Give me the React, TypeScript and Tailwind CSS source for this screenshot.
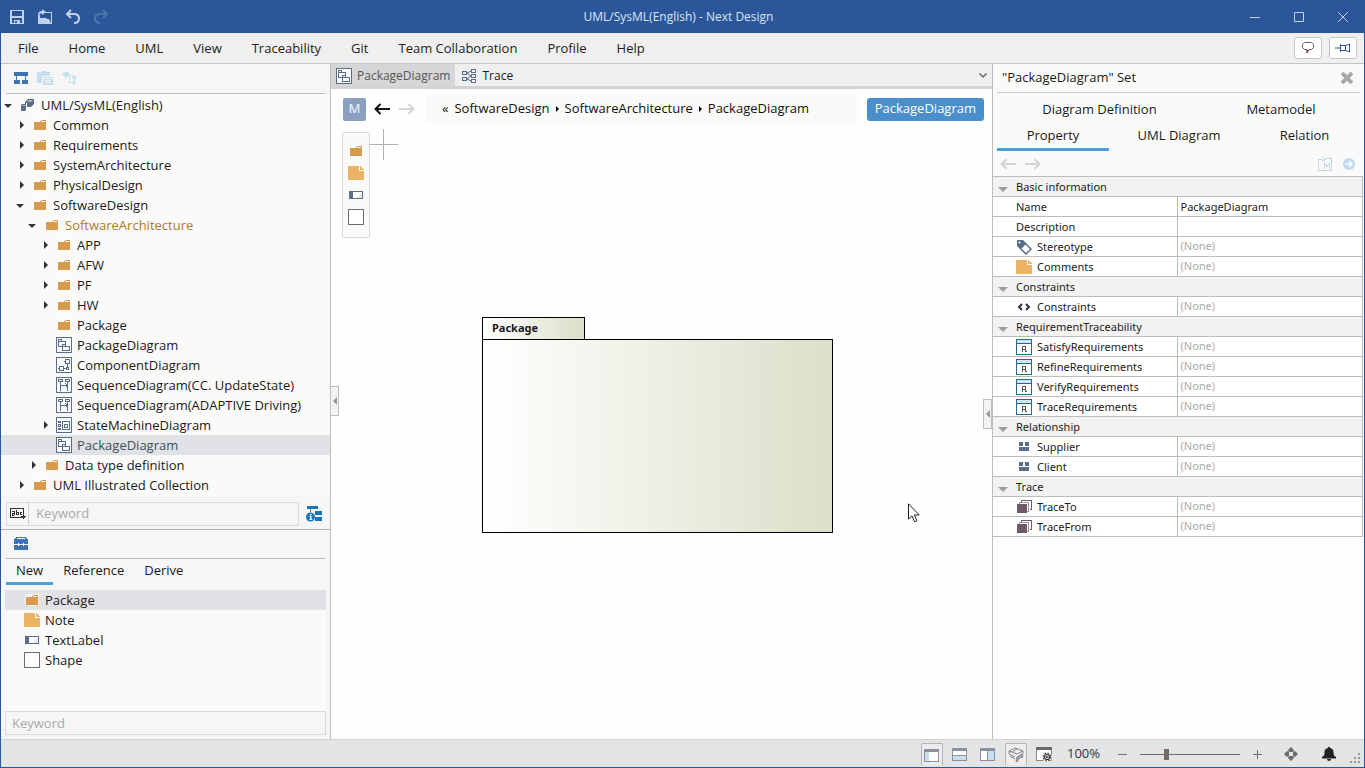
import type { ReactNode } from 'react';
import clsx from 'clsx';

type IconName =
  | 'folder'
  | 'note'
  | 'textLabel'
  | 'shape'
  | 'project'
  | 'package'
  | 'component'
  | 'sequence'
  | 'state'
  | 'tag'
  | 'code'
  | 'requirement'
  | 'blocks'
  | 'stack';

const SLATE = '#596d87';

/* All item icons share a 16x16 box */
const ICONS: Record<IconName, ReactNode> = {
  folder: (
    <>
      <path d="M1 2h14v12H1z" fill="#fff" fillOpacity=".6" />
      <path d="M2 5h6l1-2h5v10H2z" fill="#d89b4e" />
      <path d="M8 5h5V4H9z" fill="#fff" />
    </>
  ),
  note: (
    <>
      <path d="M0 1h11v5h5v9H0z" fill="#eab464" />
      <path d="M12 1l4 4h-4z" fill="#eab464" />
    </>
  ),
  textLabel: (
    <>
      <path d="M1 4h14v8H1z" fill={SLATE} />
      <path d="M5 5h9v6H5z" fill="#fff" />
      <path d="M14 6v5H8z" fill="#e6e8ec" />
    </>
  ),
  shape: <path d="M.5.5h15v15H.5z" fill="#fff" stroke="#6b6b6b" />,
  project: (
    <>
      <path d="M5 5l3-3h6v5l-3 3H7L5 8z" fill={SLATE} />
      <path d="M1 8l1-1h4v6l-1 1H1z" fill={SLATE} />
      <path d="M7 5l2-2h4l-2 2zM2 9l1-1h3L5 9z" fill="#aeb7c5" />
      <path d="M6.500 6v4" stroke="#fafaf8" />
    </>
  ),
  package: (
    <g fill="none" stroke={SLATE}>
      <path d="M.5.5h15v15H.5z" fill="#fafbfc" />
      <path d="M2.500 9.500v-7h3v2h4v3M2.500 4.500h3M2.500 9.500h4" />
      <path d="M6.500 13.500v-6h3v2h4v4zM6.500 9.500h3" />
    </g>
  ),
  component: (
    <g fill="none" stroke={SLATE}>
      <path d="M.5.5h15v15H.5z" fill="#fafbfc" />
      <path d="M9.500 2.500h4v4h-4zM8 4.500h2M3.500 9.500h4v4h-4zM2 11.500h2M11.500 6.500v4M7.500 11.500h3" />
      <path d="M10.500 10.500h2v2h-2z" />
    </g>
  ),
  sequence: (
    <g fill="none" stroke={SLATE}>
      <path d="M.5.5h15v15H.5z" fill="#fafbfc" />
      <path d="M2.500 2.500h4v2h-4zM9.500 2.500h4v2h-4zM4.500 5v9M11.500 5v9M5 8.500h6M9.500 6.500l2 2-2 2" />
    </g>
  ),
  state: (
    <g fill="none" stroke={SLATE}>
      <path d="M.5.5h15v15H.5z" fill="#fafbfc" />
      <path d="M6.500 4.500h7v8h-7zM8.500 7.500h3v3h-3zM2.500 7.500h2v2h-2zM2.500 11.500h2v1h-2z" />
      <path d="M2 4h3v2H2zM7 4h6v1H7z" fill={SLATE} stroke="none" />
    </g>
  ),
  tag: (
    <>
      <path d="M1 1h6l3 3-6 6-3-3z" fill={SLATE} />
      <path d="M4.500 9.500l5-5 5.500 5.500-5 5z" fill="#fff" stroke={SLATE} strokeWidth="1.500" />
      <circle cx="3.500" cy="3.500" r="1" fill="#fff" />
    </>
  ),
  code: <path d="M6 5L3 8l3 3M10 5l3 3-3 3" fill="none" stroke="#2f3640" strokeWidth="2" />,
  requirement: (
    <>
      <path d="M.5.5h15v15H.5z" fill="#fff" stroke="#1c6c93" />
      <path d="M1 1h14v3H1z" fill="#cfe9f2" />
      <path d="M1 4h14v1H1z" fill="#1c6c93" />
      <path d="M6.500 13V7.500h3v3h-3M8.500 10.500l2 2.500" fill="none" stroke="#555" />
    </>
  ),
  blocks: <path d="M3 3h4v4H3zM9 3h4v4H9zM3 8h10v4H3z" fill={SLATE} />,
  stack: (
    <>
      <path d="M5.500 3V1.500h10v9H14" fill="none" stroke="#705a68" />
      <path d="M3.500 5V3.500h9v9H11" fill="none" stroke="#a093a0" />
      <path d="M1 5h10v9H1z" fill="#705a68" />
    </>
  ),
};

function Icon({ name }: { name: IconName }) {
  const smooth = name === 'code' || name === 'tag' || name === 'project';
  return (
    <svg
      className="h-4 w-4 shrink-0"
      viewBox="0 0 16 16"
      shapeRendering={smooth ? 'auto' : 'crispEdges'}
      aria-hidden="true"
    >
      {ICONS[name]}
    </svg>
  );
}

function Arrow({ back = false, className }: { back?: boolean; className: string }) {
  return (
    <svg className={clsx('h-3 w-4', className)} viewBox="0 0 16 12" fill="none" stroke="currentColor" aria-hidden="true">
      {back ? <path d="M16 6H1M6.500 1l-5 5 5 5" /> : <path d="M0 6h15M9.500 1l5 5-5 5" />}
    </svg>
  );
}

interface TreeItem {
  label: string;
  level: 0 | 1 | 2 | 3;
  icon: IconName;
  state?: 'open' | 'closed';
  accent?: boolean;
  selected?: boolean;
}

const TREE: TreeItem[] = [
  { label: 'UML/SysML(English)', level: 0, icon: 'project', state: 'open' },
  { label: 'Common', level: 1, icon: 'folder', state: 'closed' },
  { label: 'Requirements', level: 1, icon: 'folder', state: 'closed' },
  { label: 'SystemArchitecture', level: 1, icon: 'folder', state: 'closed' },
  { label: 'PhysicalDesign', level: 1, icon: 'folder', state: 'closed' },
  { label: 'SoftwareDesign', level: 1, icon: 'folder', state: 'open' },
  { label: 'SoftwareArchitecture', level: 2, icon: 'folder', state: 'open', accent: true },
  { label: 'APP', level: 3, icon: 'folder', state: 'closed' },
  { label: 'AFW', level: 3, icon: 'folder', state: 'closed' },
  { label: 'PF', level: 3, icon: 'folder', state: 'closed' },
  { label: 'HW', level: 3, icon: 'folder', state: 'closed' },
  { label: 'Package', level: 3, icon: 'folder' },
  { label: 'PackageDiagram', level: 3, icon: 'package' },
  { label: 'ComponentDiagram', level: 3, icon: 'component' },
  { label: 'SequenceDiagram(CC. UpdateState)', level: 3, icon: 'sequence' },
  { label: 'SequenceDiagram(ADAPTIVE Driving)', level: 3, icon: 'sequence' },
  { label: 'StateMachineDiagram', level: 3, icon: 'state', state: 'closed' },
  { label: 'PackageDiagram', level: 3, icon: 'package', selected: true },
  { label: 'Data type definition', level: 2, icon: 'folder', state: 'closed' },
  { label: 'UML Illustrated Collection', level: 1, icon: 'folder', state: 'closed' },
];

const INDENT = ['pl-px', 'pl-[13px]', 'pl-[25px]', 'pl-[37px]'];

const MENU = ['File', 'Home', 'UML', 'View', 'Traceability', 'Git', 'Team Collaboration', 'Profile', 'Help'];

const TOOLS: { label: string; icon: IconName }[] = [
  { label: 'Package', icon: 'folder' },
  { label: 'Note', icon: 'note' },
  { label: 'TextLabel', icon: 'textLabel' },
  { label: 'Shape', icon: 'shape' },
];

interface Property {
  label: string;
  icon?: IconName;
  value?: string;
}

const SECTIONS: { title: string; rows: Property[] }[] = [
  {
    title: 'Basic information',
    rows: [
      { label: 'Name', value: 'PackageDiagram' },
      { label: 'Description', value: '' },
      { label: 'Stereotype', icon: 'tag' },
      { label: 'Comments', icon: 'note' },
    ],
  },
  { title: 'Constraints', rows: [{ label: 'Constraints', icon: 'code' }] },
  {
    title: 'RequirementTraceability',
    rows: [
      { label: 'SatisfyRequirements', icon: 'requirement' },
      { label: 'RefineRequirements', icon: 'requirement' },
      { label: 'VerifyRequirements', icon: 'requirement' },
      { label: 'TraceRequirements', icon: 'requirement' },
    ],
  },
  {
    title: 'Relationship',
    rows: [
      { label: 'Supplier', icon: 'blocks' },
      { label: 'Client', icon: 'blocks' },
    ],
  },
  {
    title: 'Trace',
    rows: [
      { label: 'TraceTo', icon: 'stack' },
      { label: 'TraceFrom', icon: 'stack' },
    ],
  },
];

function TitleBar() {
  return (
    <header className="flex h-[33px] shrink-0 items-center bg-[#2b579a] text-[#c3d1e8]">
      <div className="flex flex-1 items-center gap-3 pl-2">
        <button aria-label="Save">
          <svg className="h-4 w-4" viewBox="0 0 16 16" fill="currentColor" fillRule="evenodd" shapeRendering="crispEdges">
            <path d="M1 1h14v14H1zM3 2v5h10V2zM3 9v5h2v-3h6v3h2V9zM6 12v2h2v-2z" />
          </svg>
        </button>
        <button aria-label="Open">
          <svg className="h-4 w-4" viewBox="0 0 16 16" fill="currentColor">
            <path d="M2 6h1v8h12v1H1V6zM7 3h8v12h-1V4H7z" />
            <path d="M3 14V9h6l1 1h2l2 4zM5 0l4 3-4 3V4.500C3 4.500 2.500 5 2 6H1c0-2.500 1.500-4 4-4z" />
          </svg>
        </button>
        <button aria-label="Undo">
          <svg className="h-4 w-4" viewBox="0 0 16 16" fill="none" stroke="currentColor" strokeWidth="2">
            <path d="M6 1L2 5l4 4M2 5h7c3 0 5 1.500 5 4.500S12 14 9 14" />
          </svg>
        </button>
        <button aria-label="Redo" className="text-[#4d77a8]">
          <svg className="h-4 w-4" viewBox="0 0 16 16" fill="none" stroke="currentColor" strokeWidth="2">
            <path d="M10 1l4 4-4 4M14 5H7c-3 0-5 1.500-5 4.500S4 14 7 14" />
          </svg>
        </button>
      </div>
      <h1 className="text-[12px] text-[#dbe4f2]">UML/SysML(English) - Next Design</h1>
      <div className="flex flex-1 items-center justify-end gap-[34px] pr-4">
        <button aria-label="Minimize">
          <svg className="h-[10px] w-[10px]" viewBox="0 0 10 10" stroke="currentColor"><path d="M0 5.500h10" /></svg>
        </button>
        <button aria-label="Maximize">
          <svg className="h-[10px] w-[10px]" viewBox="0 0 10 10" fill="none" stroke="currentColor"><path d="M.5.5h9v9h-9z" /></svg>
        </button>
        <button aria-label="Close">
          <svg className="h-[10px] w-[10px]" viewBox="0 0 10 10" stroke="currentColor"><path d="M0 0l10 10M10 0L0 10" /></svg>
        </button>
      </div>
    </header>
  );
}

function MenuBar() {
  return (
    <nav className="flex h-[31px] shrink-0 items-center border-b border-[#c3c3c3] bg-[#efefef] pr-[7px] pl-[2px] text-[#222]">
      {MENU.map((item) => (
        <button key={item} className="px-[15px] leading-5">{item}</button>
      ))}
      <div className="ml-auto flex gap-[7px]">
        <button aria-label="Feedback" className="flex h-[22px] w-7 items-center justify-center rounded-[3px] border border-[#c6c6c6] bg-white">
          <svg className="h-3 w-3" viewBox="0 0 12 12" fill="none" stroke="#6a5560">
            <path d="M2.500.5h7l2 2v3l-2 2H7L5 11V7.500H2.500l-2-2v-3z" />
            <path d="M4.500 8v3l3-3z" fill="#6a5560" stroke="none" />
          </svg>
        </button>
        <button aria-label="Pin ribbon" className="flex h-[22px] w-7 items-center justify-center rounded-[3px] border border-[#c6c6c6] bg-white">
          <svg className="h-[10px] w-4" viewBox="0 0 16 10" fill="none" stroke="#2b579a">
            <path d="M0 5h5M5.500 1v8M5.500 2.500H11L14.500 1v8L11 7.500H5.500M10.500 2.500v5" />
          </svg>
        </button>
      </div>
    </nav>
  );
}

function ModelTree() {
  return (
    <ul className="h-[402px] shrink-0 bg-[#fafaf8] pt-px">
      {TREE.map((item, i) => (
        <li
          key={i}
          className={clsx('flex h-5 items-center', INDENT[item.level], item.selected && 'bg-[#e1e2e6] text-[#3f4f5c]', item.accent && 'text-[#ad7b2c]')}
        >
          <svg className="h-3 w-[18px] shrink-0" viewBox="0 0 18 12" fill="#333340" aria-hidden="true">
            {item.state === 'closed' && <path d="M6 2l4 4-4 4z" />}
            {item.state === 'open' && <path d="M2 5h8L6 9z" />}
          </svg>
          <Icon name={item.icon} />
          <span className="pl-[5px] leading-5 whitespace-nowrap">{item.label}</span>
        </li>
      ))}
    </ul>
  );
}

function LeftPanel() {
  return (
    <aside className="flex w-[330px] shrink-0 flex-col border-r border-[#bdbdbd] bg-[#f6f6f6]">
      <div className="mx-[5px] flex h-[30px] shrink-0 items-center gap-2 border-b border-[#bdbdbd] pb-px pl-[7px]">
        <button aria-label="Model view">
          <svg className="h-4 w-4" viewBox="0 0 16 16" fill="#3f74b0" shapeRendering="crispEdges">
            <path d="M1 2h14v4H1zM3 6h1v4H3zM12 6h1v4h-1zM1 10h6v4H1zM9 10h6v4H9z" />
          </svg>
        </button>
        <button aria-label="Clipboard view">
          <svg className="h-4 w-4" viewBox="0 0 16 16" fill="#c6dfec" fillRule="evenodd" shapeRendering="crispEdges">
            <path d="M0 2h5V1h5v1h3v4H5v7H0z" />
            <path d="M6 7h10v8H6zM7 8v1h8V8zM8 10v1h6v-1zM8 12v1h6v-1z" />
          </svg>
        </button>
        <button aria-label="Relation view" className="ml-px">
          <svg className="h-4 w-4" viewBox="0 0 16 16" fill="#c6dfec">
            <path d="M5 1l3 3-4 4-4-4zM7 5h4v1H7zM7 6h1v7H7zM12 5l3 3-3 2-2-2zM8 12h2v1H8zM12 10l2 2-2 3-2-3z" />
          </svg>
        </button>
      </div>
      <ModelTree />
      <div className="mt-[2px] flex h-8 shrink-0 items-center border-b border-[#b1b1b1] pl-[5px]">
        <div className="flex h-6 flex-1 items-center border border-[#d9d9d9]">
          <button aria-label="Search mode" className="flex h-full w-6 items-center justify-center border-r border-[#d0d0d0]">
            <svg className="h-3 w-4" viewBox="0 0 16 12" fill="none" stroke="#333" shapeRendering="crispEdges">
              <path d="M.5.5h13v9H.5z" />
              <path d="M2 3.500h2.500V7M4 5.500H2.500v1.500H4M6.500 2v5M7 4.500h1.500v2H7M12 4.500h-1.500v2H12" />
              <path d="M11 8h5l-2.500 3z" fill="#333" stroke="none" />
            </svg>
          </button>
          <input aria-label="Search model" placeholder="Keyword" className="w-full min-w-0 px-[7px] outline-none placeholder:text-[#a9a9a9]" />
        </div>
        <button aria-label="Search details" className="mr-2 ml-[7px]">
          <svg className="h-4 w-4" viewBox="0 0 16 16" fill="#1775bd">
            <path d="M1 0h11v3H1zM9 5h7v4H9zM9 11h7v4H9z" />
            <path d="M4 3h1v3H4z" fill="#777" />
            <circle cx="4.500" cy="11" r="4.500" />
            <path d="M4 8h1.500v1.500H4zM3.500 10H5.500v3h.8v1H3.300v-1H4v-2h-.5z" fill="#fff" />
          </svg>
        </button>
      </div>
      <div className="mx-[5px] flex h-[29px] shrink-0 items-center border-b border-[#bdbdbd] pl-[7px]">
        <button aria-label="Toolbox">
          <svg className="h-4 w-4" viewBox="0 0 16 16" fill="#3f74b0" shapeRendering="crispEdges">
            <path d="M3 1h10l2 3v4H1V4zM4 2v1h8V2z" fillRule="evenodd" />
            <path d="M1 9h14v5H1z" />
            <path d="M5 7h1v3H5zM10 7h1v3h-1z" fill="#fff" />
          </svg>
        </button>
      </div>
      <div role="tablist" className="flex h-[26px] shrink-0 pl-[5px]">
        <button role="tab" aria-selected="true" className="border-b-[3px] border-[#4c9ed6] px-[10px]">New</button>
        <button role="tab" aria-selected="false" className="border-b-[3px] border-transparent px-[10px]">Reference</button>
        <button role="tab" aria-selected="false" className="border-b-[3px] border-transparent px-[10px]">Derive</button>
      </div>
      <ul className="mx-1 mt-[5px] flex-1 bg-[#fafaf8]">
        {TOOLS.map((tool, i) => (
          <li key={tool.label} className={clsx('flex h-5 items-center gap-[5px] pl-[19px]', i === 0 && 'bg-[#e1e2e6]')}>
            <Icon name={tool.icon} />
            <span className="leading-5">{tool.label}</span>
          </li>
        ))}
      </ul>
      <input
        aria-label="Search tools"
        placeholder="Keyword"
        className="mx-1 mb-1 h-6 shrink-0 border border-[#d9d9d9] px-[6px] outline-none placeholder:text-[#a9a9a9]"
      />
    </aside>
  );
}

function Breadcrumbs() {
  return (
    <div className="flex items-center pt-[5px] pr-2 pl-3">
      <button className="h-[23px] w-[23px] rounded-[2px] bg-[#8ba0c0] font-semibold text-[#e4eaf3]">M</button>
      <button aria-label="Back" className="ml-2"><Arrow back className="stroke-2 text-[#111]" /></button>
      <button aria-label="Forward" className="ml-[9px]"><Arrow className="stroke-2 text-[#d5d5d5]" /></button>
      <nav aria-label="Breadcrumb" className="ml-[11px] flex h-[30px] flex-1 items-center gap-[6px] rounded bg-[#fafaf8] pl-4 whitespace-nowrap text-[#111]">
        <span>«</span>
        <a href="#design">SoftwareDesign</a>
        <svg className="h-[6px] w-[3px]" viewBox="0 0 3 6"><path d="M0 0l3 3-3 3z" /></svg>
        <a href="#architecture">SoftwareArchitecture</a>
        <svg className="h-[6px] w-[3px]" viewBox="0 0 3 6"><path d="M0 0l3 3-3 3z" /></svg>
        <a href="#package">PackageDiagram</a>
      </nav>
      <button className="ml-2 h-[23px] rounded-[3px] bg-[#4a8ecb] px-2 text-white">PackageDiagram</button>
    </div>
  );
}

function Editor() {
  return (
    <main className="relative flex min-w-0 flex-1 flex-col bg-[#fefefe]">
      <div role="tablist" className="flex h-[25px] shrink-0 items-center border-b-[3px] border-[#d2d2d2] bg-[#efefef] pr-[5px]">
        <button role="tab" aria-selected="true" className="flex h-full items-center gap-[5px] bg-[#d5d6d8] px-[5px] pt-[2px] text-[12px] text-[#555]">
          <Icon name="package" />
          PackageDiagram
        </button>
        <button role="tab" aria-selected="false" className="flex h-full items-center gap-[5px] px-[6px] pt-[2px] text-[12px] text-[#222]">
          <svg className="h-4 w-4" viewBox="0 0 16 16" fill="none" stroke={SLATE} shapeRendering="crispEdges" aria-hidden="true">
            <path d="M1.500 3.500h4v3h-4zM1.500 9.500h4v3h-4zM10.500 1.500h4v3h-4zM10.500 6.500h4v3h-4zM10.500 11.500h4v3h-4z" />
            <path d="M6 5l4-2M6 5l4 3M6 11l4-3M6 11l4 2" shapeRendering="auto" />
          </svg>
          Trace
        </button>
        <button aria-label="List tabs" className="ml-auto">
          <svg className="h-2 w-2" viewBox="0 0 8 8" fill="none" stroke="#666" strokeWidth="1.500"><path d="M.5 2.500L4 6l3.500-3.500" /></svg>
        </button>
      </div>
      <Breadcrumbs />

      {/* Canvas */}
      <div className="relative flex-1 overflow-hidden">
        <svg className="absolute top-[5px] left-[39px] h-[31px] w-7" viewBox="0 0 28 31" stroke="#b0b0b0" aria-hidden="true">
          <path d="M0 15.500h28M13.500 0v31" />
        </svg>
        <div role="toolbar" className="absolute top-2 left-[11px] flex w-7 flex-col items-center gap-[6px] rounded-[2px] border border-[#d9d9d9] bg-[#fafaf8] pt-[10px] pb-3">
          {TOOLS.map((tool) => (
            <button key={tool.label} aria-label={tool.label}><Icon name={tool.icon} /></button>
          ))}
        </div>
        <div className="absolute top-[193px] left-[151px] w-[351px]">
          <div className="flex h-[22px] w-[103px] items-center border border-b-0 border-black bg-linear-to-r from-white to-[#dcdfc9] pl-[9px] font-['Noto_Sans',sans-serif] text-[11px] font-bold">
            Package
          </div>
          <div className="h-[194px] border border-black bg-linear-to-r from-white to-[#dcdfc9]" />
        </div>
        <svg className="absolute top-[379px] left-[577px] h-5 w-3" viewBox="0 0 12 20" fill="#fff" stroke="#222" aria-hidden="true">
          <path d="M.5.8v15.400l3.500-3.400 2.600 6 2.400-1-2.600-5.800h4.800z" />
        </svg>
      </div>

      <button aria-label="Collapse left panel" className="absolute top-[322px] left-0 flex h-[30px] w-2 items-center justify-center border border-l-0 border-[#bdbdbd] bg-[#f3f3f3]">
        <svg className="h-2 w-1" viewBox="0 0 4 8" fill="#999"><path d="M4 0v8L0 4z" /></svg>
      </button>
      <button aria-label="Collapse right panel" className="absolute top-[335px] right-0 flex h-[30px] w-[9px] items-center justify-center border border-[#bdbdbd] bg-[#f3f3f3]">
        <svg className="h-2 w-1" viewBox="0 0 4 8" fill="#999"><path d="M4 0v8L0 4z" /></svg>
      </button>
    </main>
  );
}

function PropertyTable() {
  return (
    <table className="mr-px table-fixed border-separate border-spacing-0 border-t border-r border-[#bdbdbd] bg-white text-left font-['Noto_Sans',sans-serif] text-[11px]">
      <colgroup>
        <col className="w-1/2" />
        <col className="w-1/2" />
      </colgroup>
      {SECTIONS.map((section) => (
        <tbody key={section.title}>
          <tr>
            <th colSpan={2} className="h-5 border-b border-[#bdbdbd] bg-[#f2f2f2] p-0 font-normal">
              <span className="flex h-[19px] items-center pt-px">
                <svg className="mt-1 mr-2 ml-[5px] h-[5px] w-[10px]" viewBox="0 0 10 5" fill="#9d9d9d"><path d="M0 0h10L5 5z" /></svg>
                {section.title}
              </span>
            </th>
          </tr>
          {section.rows.map((row) => (
            <tr key={row.label}>
              <th className="h-5 border-r border-b border-[#bdbdbd] p-0 pl-[23px] font-normal">
                <label htmlFor={row.value === undefined ? undefined : row.label} className="flex h-[19px] items-center gap-[5px] pt-px">
                  {row.icon && <Icon name={row.icon} />}
                  {row.label}
                </label>
              </th>
              <td className="h-5 border-b border-[#bdbdbd] p-0 pl-[3px]">
                {row.value === undefined ? (
                  <span className="flex h-[19px] items-center text-[#a8a8a8]">(None)</span>
                ) : (
                  <input id={row.label} defaultValue={row.value} className="block h-[19px] w-full outline-none" />
                )}
              </td>
            </tr>
          ))}
        </tbody>
      ))}
    </table>
  );
}

function PropertyPanel() {
  return (
    <aside className="flex w-[372px] shrink-0 flex-col border-l border-[#bdbdbd] bg-[#fefefe]">
      <div className="flex flex-col bg-[#fafaf8]">
        <div className="mx-1 flex h-[29px] items-center justify-between border-b border-[#c9c9c9] pr-[7px] pl-[5px]">
          <h2>"PackageDiagram" Set</h2>
          <button aria-label="Close panel">
            <svg className="h-3 w-3" viewBox="0 0 12 12" stroke="#a6a6a6" strokeWidth="4"><path d="M1 1l10 10M11 1L1 11" /></svg>
          </button>
        </div>
        <div role="tablist" className="mx-1 pt-1">
          <div className="flex h-[27px] pb-[2px]">
            <button role="tab" aria-selected="false" className="w-[205px]">Diagram Definition</button>
            <button role="tab" aria-selected="false" className="flex-1">Metamodel</button>
          </div>
          <div className="flex h-[27px]">
            <button role="tab" aria-selected="true" className="w-[112px] border-b-[3px] border-[#4c9ed6]">Property</button>
            <button role="tab" aria-selected="false" className="w-[140px] border-b-[3px] border-transparent">UML Diagram</button>
            <button role="tab" aria-selected="false" className="flex-1 border-b-[3px] border-transparent">Relation</button>
          </div>
        </div>
        <div className="flex h-[25px] items-center pr-[9px] pl-[7px]">
          <button aria-label="Previous"><Arrow back className="stroke-2 text-[#d3d3d3]" /></button>
          <button aria-label="Next" className="ml-[9px]"><Arrow className="stroke-2 text-[#d3d3d3]" /></button>
          <button aria-label="Open metamodel" className="ml-auto">
            <svg className="h-4 w-4" viewBox="0 0 16 16" fill="none" stroke="#c6d6de" shapeRendering="crispEdges">
              <path d="M1.500 6v8.500h13v-12H9" />
              <path d="M1 5V3h4M5 1l3 2.500L5 6M7.500 13V7.500l2.500 3 2.500-3V13" stroke="#b9d9ea" />
            </svg>
          </button>
          <button aria-label="Go to" className="ml-[10px]">
            <svg className="h-3 w-3" viewBox="0 0 12 12">
              <circle cx="6" cy="6" r="6" fill="#bfdbec" />
              <path d="M2.500 6h6M6 3l3 3-3 3" fill="none" stroke="#fff" strokeWidth="1.500" />
            </svg>
          </button>
        </div>
      </div>
      <PropertyTable />
    </aside>
  );
}

function StatusBar() {
  return (
    <footer className="flex h-7 shrink-0 items-center justify-end border-t border-[#d2d2d2] bg-[#e3e4e6] pt-px pr-1">
      <button aria-label="Left pane" className="flex h-[22px] w-[22px] items-center justify-center rounded-t-[2px] border border-b-0 border-[#b5b5b5] bg-[#ededed]">
        <svg className="h-4 w-4" viewBox="0 0 16 16" shapeRendering="crispEdges">
          <path d="M.5 2.500h14v12H.5z" fill="#fff" stroke="#8d8fa0" /><path d="M0 2h15v3H0z" fill="#8d8fa0" /><path d="M1 5h4v9H1z" fill="#c6dfec" />
        </svg>
      </button>
      <button aria-label="Bottom pane" className="ml-[9px]">
        <svg className="h-4 w-4" viewBox="0 0 16 16" shapeRendering="crispEdges">
          <path d="M.5 2.500h14v12H.5z" fill="#fff" stroke="#8d8fa0" /><path d="M0 2h15v3H0zM0 9h15v1H0z" fill="#8d8fa0" /><path d="M1 10h13v4H1z" fill="#c6dfec" />
        </svg>
      </button>
      <button aria-label="Right pane" className="ml-3">
        <svg className="h-4 w-4" viewBox="0 0 16 16" shapeRendering="crispEdges">
          <path d="M.5 2.500h14v12H.5z" fill="#fff" stroke="#8d8fa0" /><path d="M0 2h15v3H0zM7 5h1v9H7z" fill="#8d8fa0" /><path d="M8 5h6v9H8z" fill="#c6dfec" />
        </svg>
      </button>
      <button aria-label="Layers" className="ml-[9px] flex h-[22px] w-[22px] items-center justify-center rounded-t-[2px] border border-b-0 border-[#b5b5b5] bg-[#ededed]">
        <svg className="h-4 w-4" viewBox="0 0 16 16" fill="none" stroke="#85858f">
          <path d="M1 4l6-3 8 3-6 3zM1 4v3l6 3M2 9l5 3M15 4v3l-2 1M4 5l5-3" />
          <path d="M8 14l1-4 5-3 1 3-4 1-2 4z" fill="#a5a5ae" />
        </svg>
      </button>
      <button aria-label="Window settings" className="ml-[9px]">
        <svg className="h-4 w-4" viewBox="0 0 16 16">
          <path d="M.5 2.500h15v12H.5z" fill="#fff" stroke="#85858f" /><path d="M0 1h16v3H0z" fill="#706868" />
          <circle cx="11" cy="11" r="5" fill="#eee" /><circle cx="11" cy="11" r="2.500" fill="none" stroke="#333" strokeWidth="1.200" />
          <circle cx="11" cy="11" r="3.800" fill="none" stroke="#333" strokeWidth="1.200" strokeDasharray="1.500 1.500" /><circle cx="11" cy="11" r="1" fill="#333" />
        </svg>
      </button>
      <output className="ml-[15px] text-[#333]">100%</output>
      <button aria-label="Zoom out" className="ml-[18px]">
        <svg className="h-[9px] w-[9px]" viewBox="0 0 9 9" stroke="#786c6a"><path d="M0 4.500h9" /></svg>
      </button>
      <input
        type="range"
        aria-label="Zoom"
        defaultValue={25}
        className="mx-[13px] h-[11px] w-[100px] appearance-none bg-linear-to-r from-[#786c6a] to-[#786c6a] bg-size-[100%_1px] bg-center bg-no-repeat [&::-webkit-slider-thumb]:h-[11px] [&::-webkit-slider-thumb]:w-[5px] [&::-webkit-slider-thumb]:appearance-none [&::-webkit-slider-thumb]:bg-[#786c6a]"
      />
      <button aria-label="Zoom in">
        <svg className="h-[9px] w-[9px]" viewBox="0 0 9 9" stroke="#786c6a"><path d="M0 4.500h9M4.500 0v9" /></svg>
      </button>
      <button aria-label="Fit to window" className="ml-[22px]">
        <svg className="h-[14px] w-[14px]" viewBox="0 0 14 14" fill="#6b6b6b">
          <path d="M7 0l3 3-1 2H5L4 3zM7 14l3-3-1-2H5l-1 2zM0 7l3-3 2 1v4l-2 1zM14 7l-3-3-2 1v4l2 1z" />
          <path d="M5 5h4v4H5z" fill="#e3e4e6" />
        </svg>
      </button>
      <button aria-label="Notifications" className="ml-6">
        <svg className="h-[14px] w-[14px]" viewBox="0 0 14 14" fill="#222">
          <path d="M6 0h2v1c2.500.5 3.500 2 3.500 4 0 3 .5 4 2.500 5v1.500H0V10c2-1 2.500-2 2.500-5 0-2 1-3.500 3.500-4zM5 12h4c0 1-1 2-2 2s-2-1-2-2z" />
        </svg>
      </button>
      <svg className="mb-1 ml-[14px] h-[10px] w-[10px] self-end" viewBox="0 0 10 10" fill="#999" shapeRendering="crispEdges" aria-hidden="true">
        <path d="M8 0h2v2H8zM4 4h2v2H4zM8 4h2v2H8zM0 8h2v2H0zM4 8h2v2H4zM8 8h2v2H8z" />
      </svg>
    </footer>
  );
}

export default function App() {
  return (
    <div className="flex h-screen flex-col border border-t-0 border-[#2b579a] font-['Open_Sans',sans-serif] text-[13px] text-[#1a1a1a]">
      <TitleBar />
      <MenuBar />
      <div className="flex min-h-0 flex-1">
        <LeftPanel />
        <Editor />
        <PropertyPanel />
      </div>
      <StatusBar />
    </div>
  );
}
